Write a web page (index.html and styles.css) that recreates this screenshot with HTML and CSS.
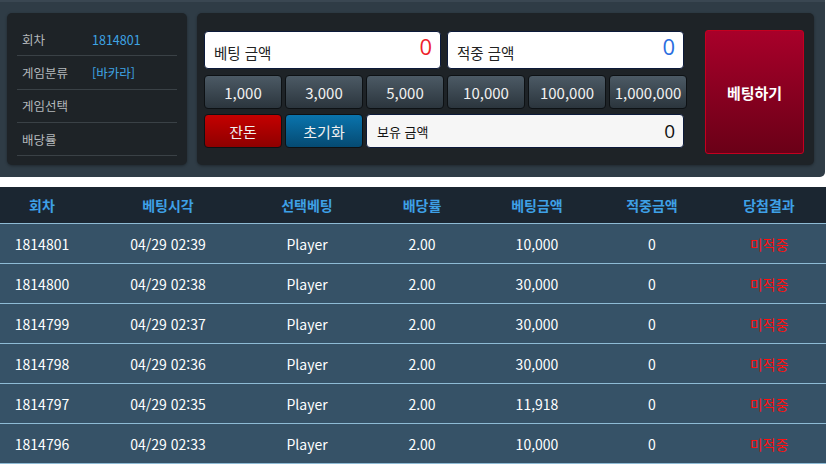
FILE: index.html
```html
<!DOCTYPE html>
<html lang="ko">
<head>
<meta charset="utf-8">
<link rel="stylesheet" href="styles.css">
</head>
<body>
<div class="top">
  <div class="info">
    <div class="info-row"><span class="lbl">회차</span><span class="val">1814801</span></div>
    <div class="info-row"><span class="lbl">게임분류</span><span class="val">[바카라]</span></div>
    <div class="info-row"><span class="lbl">게임선택</span><span class="val"></span></div>
    <div class="info-row"><span class="lbl">배당률</span><span class="val"></span></div>
  </div>
  <div class="bet">
    <div class="bet-left">
      <div class="amounts">
        <div class="amount"><span class="a-lbl">베팅 금액</span><span class="a-val red">0</span></div>
        <div class="amount"><span class="a-lbl">적중 금액</span><span class="a-val blue">0</span></div>
      </div>
      <div class="chips">
        <button class="chip">1,000</button>
        <button class="chip">3,000</button>
        <button class="chip">5,000</button>
        <button class="chip">10,000</button>
        <button class="chip">100,000</button>
        <button class="chip">1,000,000</button>
      </div>
      <div class="bottom">
        <button class="chip c-red">잔돈</button>
        <button class="chip c-blue">초기화</button>
        <div class="hold"><span class="h-lbl">보유 금액</span><span class="h-val">0</span></div>
      </div>
    </div>
    <button class="go">베팅하기</button>
  </div>
</div>
<div class="table">
  <div class="tr th">
    <div>회차</div><div>베팅시각</div><div>선택베팅</div><div>배당률</div><div>베팅금액</div><div>적중금액</div><div>당첨결과</div>
  </div>
  <div class="tr"><div>1814801</div><div>04/29 02:39</div><div>Player</div><div>2.00</div><div>10,000</div><div>0</div><div class="miss">미적중</div></div>
  <div class="tr"><div>1814800</div><div>04/29 02:38</div><div>Player</div><div>2.00</div><div>30,000</div><div>0</div><div class="miss">미적중</div></div>
  <div class="tr"><div>1814799</div><div>04/29 02:37</div><div>Player</div><div>2.00</div><div>30,000</div><div>0</div><div class="miss">미적중</div></div>
  <div class="tr"><div>1814798</div><div>04/29 02:36</div><div>Player</div><div>2.00</div><div>30,000</div><div>0</div><div class="miss">미적중</div></div>
  <div class="tr"><div>1814797</div><div>04/29 02:35</div><div>Player</div><div>2.00</div><div>11,918</div><div>0</div><div class="miss">미적중</div></div>
  <div class="tr"><div>1814796</div><div>04/29 02:33</div><div>Player</div><div>2.00</div><div>10,000</div><div>0</div><div class="miss">미적중</div></div>
</div>
</body>
</html>
```
FILE: styles.css
```css
* { box-sizing: border-box; }
html, body { margin: 0; padding: 0; background: #fff; }
body {
  font-family: "Noto Sans CJK KR", "Noto Sans", sans-serif;
  width: 826px;
  height: 464px;
  overflow: hidden;
}
.top {
  display: flex;
  align-items: flex-start;
  gap: 10px;
  background: #2f3c46;
  border-top: 2px solid #3a4752;
  border-radius: 0 0 5px 0;
  padding: 11px 11px 11px 7px;
  height: 177px;
  width: 825px;
}
.info {
  width: 180px;
  height: 152px;
  background: #1e2327;
  border-radius: 5px;
  padding: 10px 10px 0;
  box-shadow: 0 1px 3px rgba(0,0,0,0.35);
}
.info-row {
  height: 33.3px;
  border-bottom: 1px solid #3a4146;
  display: flex;
  align-items: center;
  font-size: 12.5px;
  padding-left: 5px;
}
.lbl { color: #b4b8bb; width: 70px; }
.val { color: #3ea4e4; }
.bet {
  flex: 1;
  height: 152px;
  background: #1e2327;
  border-radius: 5px;
  padding: 17px 10px 0 7px;
  display: flex;
  gap: 18px;
  box-shadow: 0 1px 3px rgba(0,0,0,0.35);
}
.bet-left { width: 483px; padding-top: 1px; }
.amounts { display: flex; gap: 6px; width: 480px; }
.amount {
  flex: 1;
  height: 38px;
  background: #fff;
  border: 1px solid #0c1a3a;
  border-radius: 4px;
  position: relative;
  padding: 0 9px;
  display: flex;
  align-items: center;
}
.a-lbl { font-size: 14.5px; color: #222; padding-top: 5px; }
.a-val {
  position: absolute;
  right: 8px;
  top: 0px;
  font-size: 22px;
  line-height: 28px;
  font-family: "Open Sans", "Noto Sans", sans-serif;
}
.red { color: #ee1f2b; }
.blue { color: #2b6ee0; }
.chips { display: flex; gap: 3px; margin-top: 6px; }
.chip {
  width: 78px;
  height: 34px;
  border: 1px solid #0d1114;
  border-radius: 4px;
  background: linear-gradient(#4c5a65, #2b353d);
  color: #f0f0f0;
  font-family: "Noto Sans CJK KR", "Noto Sans", sans-serif;
  font-size: 15px;
  padding: 0;
  display: flex;
  align-items: center;
  justify-content: center;
}
.bottom { display: flex; gap: 3px; margin-top: 5px; }
.c-red { background: linear-gradient(#c40000, #8e0000); }
.c-blue { background: linear-gradient(#0a74ad, #054a72); }
.hold {
  width: 318px;
  height: 34px;
  background: #f6f6f6;
  border: 1px solid #0c1a3a;
  border-radius: 4px;
  display: flex;
  align-items: center;
  justify-content: space-between;
  padding: 0 8px 0 10px;
}
.h-lbl { font-size: 13px; color: #111; }
.h-val { font-size: 19px; color: #111; font-family: "Open Sans", "Noto Sans", sans-serif; }
.go {
  width: 99px;
  height: 124px;
  margin-top: 0;
  border: 1px solid #c4001f;
  border-radius: 3px;
  background: linear-gradient(#a8002a, #6a0017);
  color: #fff;
  font-family: "Noto Sans CJK KR", sans-serif;
  font-weight: 700;
  font-size: 15px;
  padding: 0;
}
.table { margin-top: 10px; }
.tr {
  display: grid;
  grid-template-columns: 84px 168px 110px 120px 110px 120px 1fr;
  height: 40px;
  background: #365267;
  border-bottom: 1px solid #8ebbd5;
  color: #fff;
  font-size: 14px;
  align-items: center;
  text-align: center;
}
.tr > div { line-height: 1; }
.th {
  background: #1b2631;
  height: 37px;
  color: #3ea0e6;
  font-weight: 700;
}
.miss { color: #ff1010; }
```
